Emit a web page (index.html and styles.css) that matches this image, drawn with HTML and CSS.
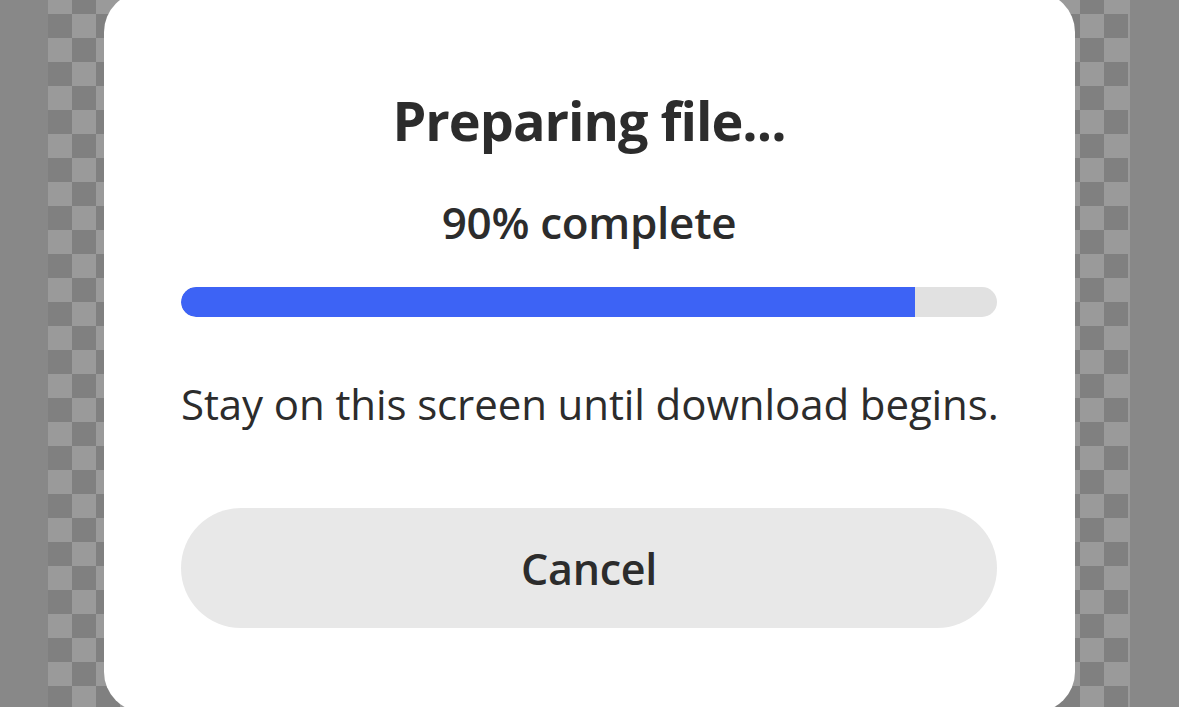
FILE: index.html
```html
<!DOCTYPE html>
<html lang="en">
<head>
<meta charset="utf-8">
<title>Preparing file</title>
<link rel="stylesheet" href="styles.css">
</head>
<body>
<div class="stage">
  <div class="side"></div>
  <div class="canvas">
    <div class="dialog">
      <h1 class="title">Preparing file...</h1>
      <p class="percent">90% complete</p>
      <div class="track"><div class="fill" style="width: 90%"></div></div>
      <p class="note">Stay on this screen until download begins.</p>
      <button class="cancel">Cancel</button>
    </div>
  </div>
  <div class="side"></div>
</div>
</body>
</html>
```
FILE: styles.css
```css
html, body {
  margin: 0;
  padding: 0;
  height: 100%;
  overflow: hidden;
}
body {
  background: #888888;
  font-family: "Open Sans", "Noto Sans", sans-serif;
  color: #2c2c2c;
}
.stage {
  display: flex;
  height: 707px;
}
.side {
  width: 48px;
  flex: none;
  background: #888888;
}
.side:last-child {
  width: 49px;
}
.canvas {
  flex: 1;
  min-width: 0;
  background-color: #808080;
  background-image: conic-gradient(#808080 0 25%, #9a9a9a 0 50%, #808080 0 75%, #9a9a9a 0);
  background-size: 48px 48px;
  background-position: 0 38px;
  border-right: 2px solid #9a9a9a;
  padding-left: 56px;
  padding-right: 53px;
}
.dialog {
  background: #ffffff;
  border-radius: 40px;
  margin-top: -8px;
  height: 720px;
  box-sizing: border-box;
  padding: 0 78px 0 77px;
  display: flex;
  flex-direction: column;
  align-items: stretch;
  text-align: center;
}
.title {
  margin: 88px 0 0;
  font-size: 54px;
  font-weight: 700;
  letter-spacing: -1px;
  line-height: 80px;
}
.percent {
  margin: 32px 0 0;
  font-size: 44px;
  font-weight: 600;
  letter-spacing: -0.3px;
  line-height: 60px;
}
.track {
  margin-top: 35px;
  height: 30px;
  border-radius: 15px;
  background: #e1e1e1;
  overflow: hidden;
}
.fill {
  height: 100%;
  background: #3d63f5;
  border-radius: 15px 0 0 15px;
}
.note {
  margin: 57px 0 0;
  font-size: 42px;
  font-weight: 400;
  letter-spacing: -0.1px;
  line-height: 60px;
  white-space: nowrap;
}
.cancel {
  margin-top: 74px;
  height: 120px;
  border: none;
  border-radius: 60px;
  background: #e8e8e8;
  color: #2c2c2c;
  font-family: inherit;
  font-size: 43px;
  font-weight: 600;
  letter-spacing: -0.3px;
}
```
